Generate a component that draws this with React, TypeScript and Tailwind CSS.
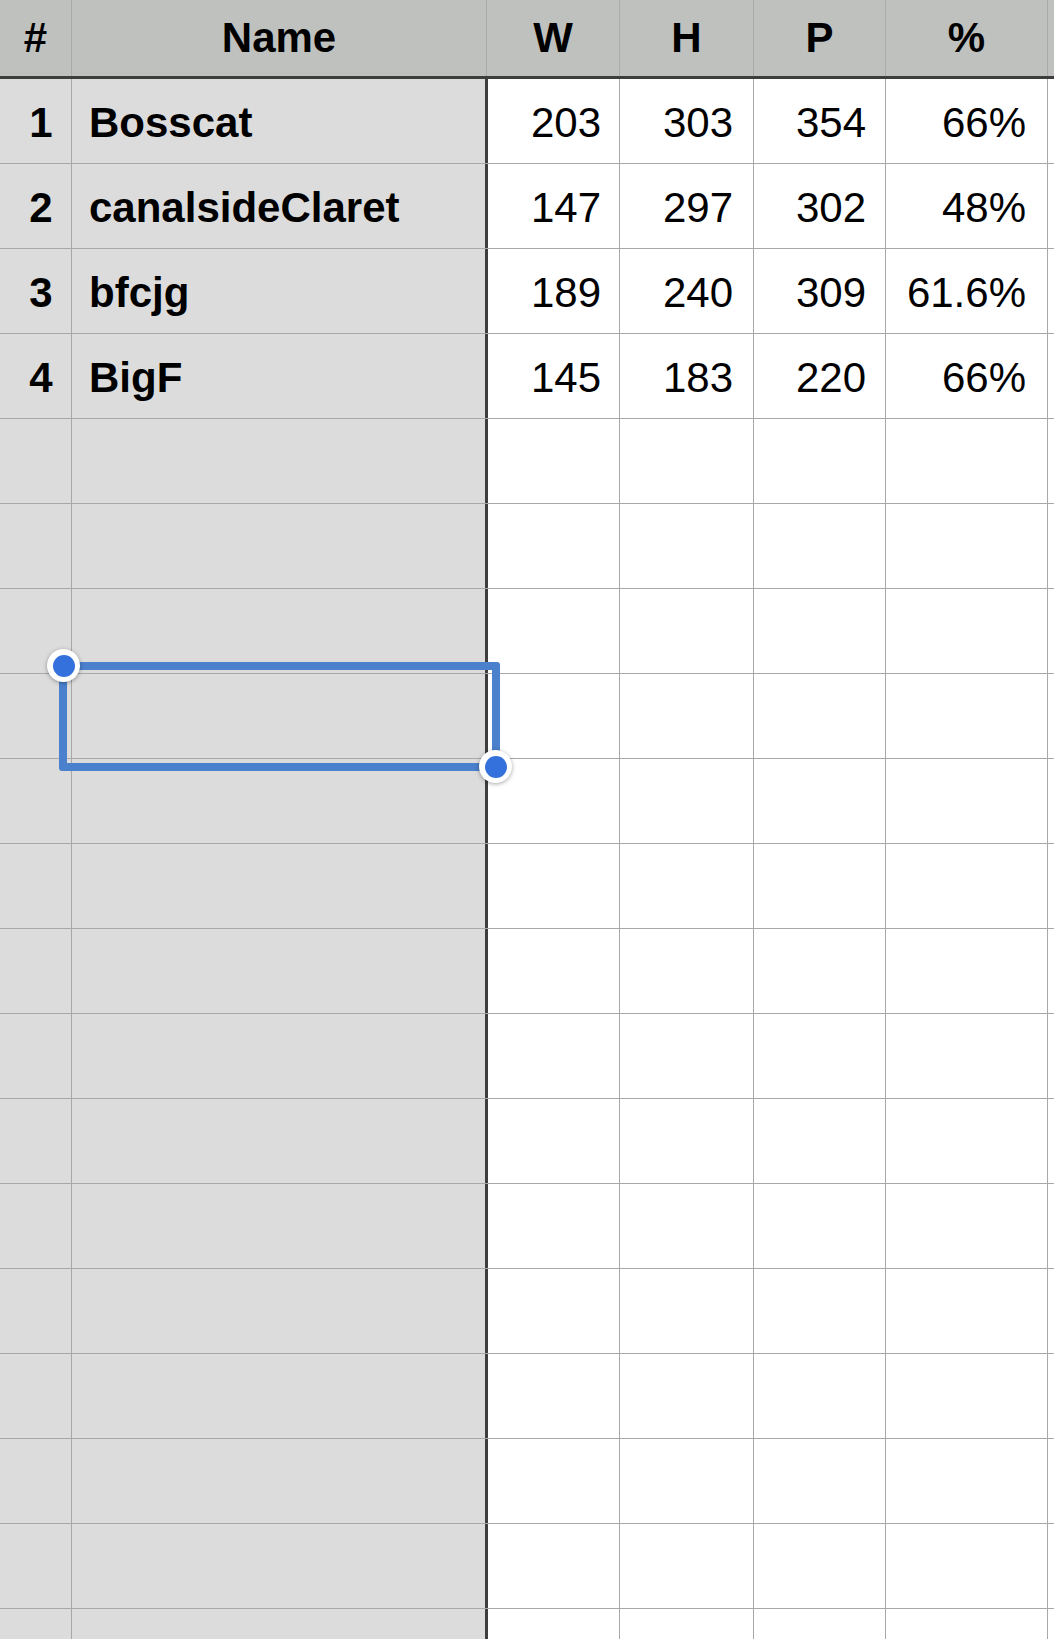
import React from "react";

type Row = { n: string; name: string; w: string; h: string; p: string; pct: string };

const ROWS: Row[] = [
  { n: "1", name: "Bosscat", w: "203", h: "303", p: "354", pct: "66%" },
  { n: "2", name: "canalsideClaret", w: "147", h: "297", p: "302", pct: "48%" },
  { n: "3", name: "bfcjg", w: "189", h: "240", p: "309", pct: "61.6%" },
  { n: "4", name: "BigF", w: "145", h: "183", p: "220", pct: "66%" },
];

const EMPTY_ROWS = 15;

function Handle({ className }: { className: string }) {
  return (
    <div
      className={`absolute w-[33px] h-[33px] rounded-full bg-white shadow-[0_1px_4px_rgba(0,0,0,0.35)] flex items-center justify-center ${className}`}
    >
      <div className="w-[22px] h-[22px] rounded-full bg-[#3471dc]" />
    </div>
  );
}

export default function App() {
  const rows: (Row | null)[] = [...ROWS, ...Array.from({ length: EMPTY_ROWS }, () => null)];

  return (
    <div className="relative w-[1054px] h-[1639px] overflow-hidden bg-white text-black font-['Liberation_Sans',Arial,sans-serif] text-[42px] leading-none">
      {/* header */}
      <div className="grid grid-cols-[72px_415px_133px_134px_132px_162px_1fr] h-[79px] bg-[#bfc1bf] border-b-[3px] border-[#3e3e3e] font-bold">
        <div className="flex items-center justify-center border-r border-[#a9aaa9]">#</div>
        <div className="flex items-center justify-center border-r border-[#a9aaa9]">Name</div>
        <div className="flex items-center justify-center border-r border-[#a9aaa9]">W</div>
        <div className="flex items-center justify-center border-r border-[#a9aaa9]">H</div>
        <div className="flex items-center justify-center border-r border-[#a9aaa9]">P</div>
        <div className="flex items-center justify-center border-r border-[#a9aaa9]">%</div>
        <div />
      </div>

      {/* body */}
      {rows.map((r, i) => (
        <div
          key={i}
          className="grid grid-cols-[72px_416px_132px_134px_132px_162px_1fr] h-[85px] border-b border-[#a8a8a8]"
        >
          <div className="flex items-center justify-center pl-[11px] pt-[4px] bg-[#dcdcdc] border-r border-[#a8a8a8] font-bold">
            {r?.n}
          </div>
          <div className="flex items-center pl-[17px] pt-[4px] bg-[#dcdcdc] border-r-[3px] border-[#3e3e3e] font-bold">
            {r?.name}
          </div>
          <div className="flex items-center justify-end pr-[18px] pt-[4px] border-r border-[#a8a8a8]">{r?.w}</div>
          <div className="flex items-center justify-end pr-[20px] pt-[4px] border-r border-[#a8a8a8]">{r?.h}</div>
          <div className="flex items-center justify-end pr-[19px] pt-[4px] border-r border-[#a8a8a8]">{r?.p}</div>
          <div className="flex items-center justify-end pr-[21px] pt-[4px] border-r border-[#a8a8a8]">{r?.pct}</div>
          <div />
        </div>
      ))}

      {/* selection */}
      <div className="absolute left-[59px] top-[662px] w-[441px] h-[109px] border-[8px] border-[#4a80cc] rounded-[3px]" />
      <Handle className="left-[47px] top-[649px]" />
      <Handle className="left-[479px] top-[750px]" />
    </div>
  );
}
